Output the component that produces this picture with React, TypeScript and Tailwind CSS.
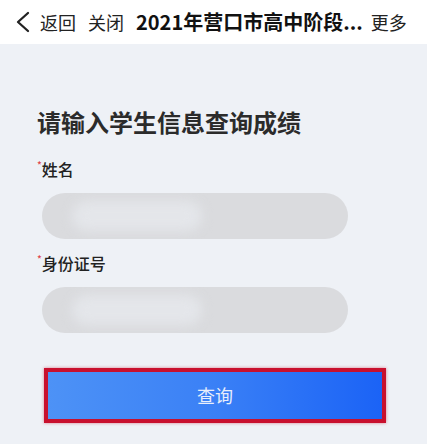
const font = { fontFamily: '"Noto Sans CJK SC", "Noto Sans", sans-serif' }

function Field({ label }: { label: string }) {
  return (
    <div className="flex flex-col">
      <div className="flex items-start text-[16px] font-medium leading-[22px] text-[#222]">
        <span className="text-[10px] leading-[14px] text-[#e0474c]">*</span>
        <span>{label}</span>
      </div>
      <div className="relative mt-[13px] ml-[5px] h-[46px] w-[306px] overflow-hidden rounded-full bg-[#dadbde]">
        <div className="absolute left-[30px] top-[8px] h-[30px] w-[130px] rounded-full bg-[#e4e6ea] blur-[6px]" />
      </div>
    </div>
  )
}

export default function App() {
  return (
    <div className="flex h-[444px] w-[427px] flex-col bg-[#eef1f6]" style={font}>
      <div className="flex h-[44px] items-center whitespace-nowrap bg-white pl-[15px] text-[18px] text-[#222]">
        <svg width="16" height="22" viewBox="0 0 16 22" fill="none" stroke="#222" strokeWidth="2.3" strokeLinecap="round" strokeLinejoin="round">
          <polyline points="13,2 3,11 13,20" />
        </svg>
        <span className="ml-[9px]">返回</span>
        <span className="ml-[12px]">关闭</span>
        <span className="ml-[12px] text-[20px] font-semibold text-[#111]">2021年营口市高中阶段...</span>
        <span className="ml-[8px]">更多</span>
      </div>
      <div className="flex flex-col px-[37px] pt-[62px]">
        <h1 className="text-[24px] font-bold leading-[32px] text-[#2b2b2b]">请输入学生信息查询成绩</h1>
        <div className="mt-[20px]">
          <Field label="姓名" />
        </div>
        <div className="mt-[13px]">
          <Field label="身份证号" />
        </div>
        <div className="mt-[35px] ml-[7px] h-[55px] w-[342px] border-[4px] border-[#c8102e] bg-[linear-gradient(90deg,#4d92f6,#3a80f6_50%,#1b63f6)] shadow-[0_0_3px_rgba(200,16,46,0.5)]">
          <div className="flex h-full items-center justify-center text-[18px] text-[#e8eefb]">查询</div>
        </div>
      </div>
    </div>
  )
}
